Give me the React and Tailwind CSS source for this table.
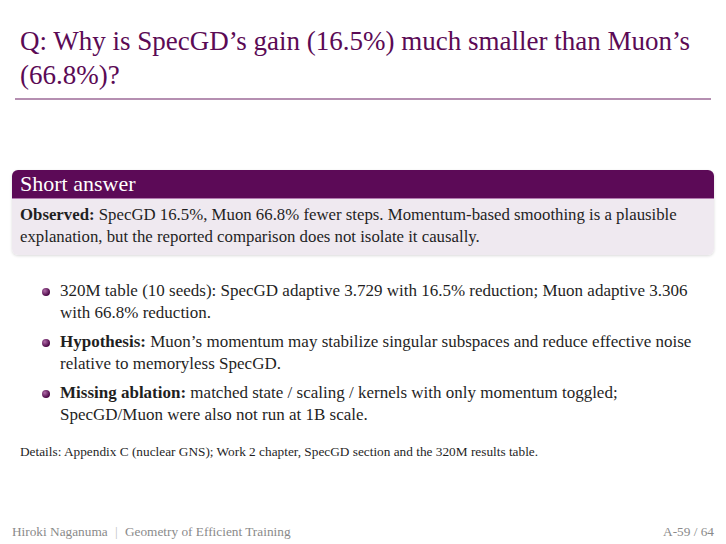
export default function App() {
  return (
    <div className="relative flex h-[544px] w-[726px] flex-col bg-white text-[#1f1f1f]" style={{ fontFamily: '"Liberation Serif", "DejaVu Serif", serif' }}>
      <div className="px-[20px] pt-[24px]">
        <h1 className="text-[27px] leading-[34px] text-[#5b0a55]">
          Q: Why is SpecGD’s gain (16.5%) much smaller than Muon’s (66.8%)?
        </h1>
      </div>
      <div className="mx-[15px] mt-[6px] h-[2px] bg-[#b58fb1]" />

      <div className="mx-[12px] mt-[70px] overflow-hidden rounded-[6px] shadow-[0_1px_3px_rgba(0,0,0,0.15)]">
        <div className="h-[28px] bg-[#5c0a57] px-[8px] text-[22px] leading-[28px] text-white">Short answer</div>
        <div className="h-[1px] bg-[#b27bb0]" />
        <div className="bg-[#efe9f0] px-[8px] pb-[7px] pt-[5px] text-[16.8px] leading-[22px]">
          <b>Observed:</b> SpecGD 16.5%, Muon 66.8% fewer steps. Momentum-based smoothing is a plausible
          <br />
          explanation, but the reported comparison does not isolate it causally.
        </div>
      </div>

      <ul className="mt-[25px] flex flex-col gap-[7px] pl-[42px] pr-[8px] text-[17px] leading-[22px]">
        {[
          <>320M table (10 seeds): SpecGD adaptive 3.729 with 16.5% reduction; Muon adaptive 3.306<br />with 66.8% reduction.</>,
          <><b>Hypothesis:</b> Muon’s momentum may stabilize singular subspaces and reduce effective noise<br />relative to memoryless SpecGD.</>,
          <><b>Missing ablation:</b> matched state / scaling / kernels with only momentum toggled;<br />SpecGD/Muon were also not run at 1B scale.</>,
        ].map((item, i) => (
          <li key={i} className="flex gap-[10px]">
            <span className="mt-[8px] h-[8px] w-[8px] shrink-0 rounded-full bg-[radial-gradient(circle_at_35%_35%,#b06aa8,#4a0645_70%)]" />
            <span className="whitespace-nowrap">{item}</span>
          </li>
        ))}
      </ul>

      <p className="mt-[18px] px-[20px] text-[13.3px] leading-[16px]">
        Details: Appendix C (nuclear GNS); Work 2 chapter, SpecGD section and the 320M results table.
      </p>

      <div className="mt-auto flex items-center justify-between px-[12px] pb-[4px] text-[13.3px] leading-[16px] text-[#8a8a8a]">
        <div>
          Hiroki Naganuma <span className="mx-[4px] text-[#c0c0c0]">|</span> Geometry of Efficient Training
        </div>
        <div>A-59 / 64</div>
      </div>
    </div>
  );
}
